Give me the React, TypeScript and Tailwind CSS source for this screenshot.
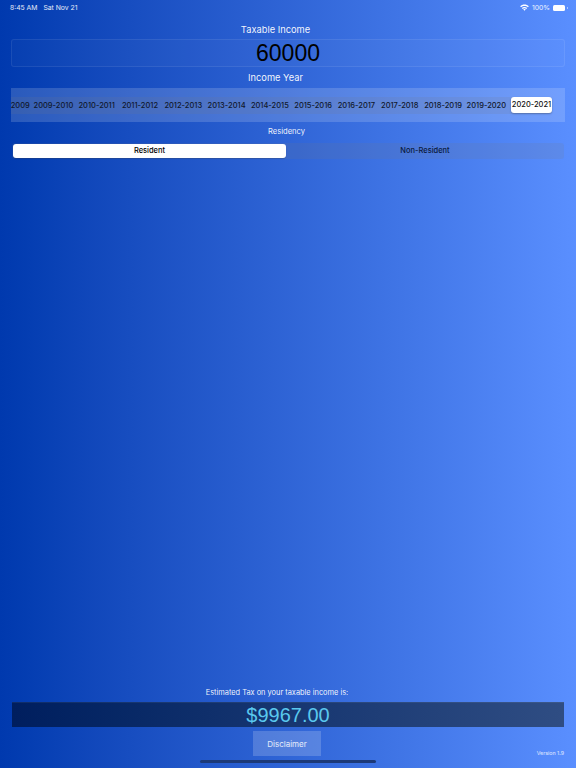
import React from "react";

const years = ["2008-2009","2009-2010","2010-2011","2011-2012","2012-2013","2013-2014","2014-2015","2015-2016","2016-2017","2017-2018","2018-2019","2019-2020"];

function Wifi() {
  return (
    <svg width="9" height="7" viewBox="0 0 20 15" fill="white">
      <path d="M10 1C6.200 1 2.900 2.500.4 4.800l2 2.100C4.400 5 7 3.900 10 3.900s5.600 1.100 7.600 3l2-2.100C17.100 2.500 13.800 1 10 1z" />
      <path d="M10 6.300c-2.200 0-4.300.9-5.900 2.400L6 10.700c1.100-1 2.500-1.600 4-1.600s2.900.6 4 1.600l1.900-2C14.300 7.200 12.200 6.300 10 6.300z" />
      <path d="M10 11c-1 0-1.900.4-2.600 1L10 14.800l2.600-2.800C11.900 11.400 11 11 10 11z" />
    </svg>
  );
}

export default function App() {
  return (
    <div className="w-[576px] h-[768px] overflow-hidden flex flex-col bg-gradient-to-r from-[#0039ae] to-[#5a8fff] font-['Inter','Liberation_Sans',sans-serif] text-white">
      <div className="h-[14px] pl-[10px] pr-[8px] pt-[1px] flex justify-between items-center text-[6.800px] leading-[10px] text-white/90 shrink-0">
        <div className="flex gap-[6px]"><span>8:45 AM</span><span>Sat Nov 21</span></div>
        <div className="flex items-center gap-[2px]">
          <Wifi />
          <span className="ml-[1px]">100%</span>
          <div className="ml-[1px] w-[12px] h-[6px] rounded-[1.500px] bg-white" />
          <div className="w-[1px] h-[2px] bg-white/50" />
        </div>
      </div>

      <div className="mt-[9px] h-[13px] pr-[25px] text-center text-[9.300px] leading-[13px] text-white/95">Taxable Income</div>

      <div className="mt-[3px] mx-[11px] h-[28px] rounded-[3px] border border-[#ffffff14] bg-[#ffffff06] flex items-center justify-center font-['Liberation_Sans',sans-serif] text-[23px] leading-[28px] text-black">60000</div>

      <div className="mt-[4px] h-[13px] pr-[25px] text-center text-[9.300px] leading-[13px] text-white/95">Income Year</div>

      <div className="mt-[4px] mx-[11px] h-[34px] bg-[#ffffff29] overflow-hidden flex items-center justify-end pr-[13px]">
        <div className="h-[17px] flex items-center bg-[#76768026] rounded-[3px] shrink-0">
          {years.map((y, i) => (
            <div key={y} className={i === 0 ? "w-[43.300px] pr-[4px] shrink-0 text-center text-[7.500px] font-medium leading-[17px] text-[#10182c] whitespace-nowrap" : "w-[43.300px] shrink-0 text-center text-[7.500px] font-medium leading-[17px] text-[#10182c] whitespace-nowrap"}>{y}</div>
          ))}
          <div className="w-[41px] h-[16px] ml-[3px] shrink-0 rounded-[3px] bg-white shadow-[0_1px_2px_rgba(0,0,0,0.25)] text-center text-[7.500px] font-medium leading-[16px] text-[#111] whitespace-nowrap">2020-2021</div>
        </div>
      </div>

      <div className="mt-[5px] h-[10px] pr-[3px] text-center text-[7.600px] leading-[10px] text-white/95">Residency</div>

      <div className="mt-[6px] mx-[12px] h-[16px] flex items-center rounded-[3px] bg-[#76768026] text-[7.500px] font-medium text-black">
        <div className="ml-[1px] w-[273px] h-[14px] rounded-[3px] bg-white flex items-center justify-center leading-[14px] shadow-[0_1px_1px_rgba(0,0,0,0.15)]">Resident</div>
        <div className="flex-1 text-center leading-[14px] text-[#0b1a3c]">Non-Resident</div>
      </div>

      <div className="flex-1" />

      <div className="h-[10px] pr-[22px] text-center text-[7.400px] leading-[10px] text-white/95">Estimated Tax on your taxable income is:</div>

      <div className="mt-[4px] mx-[12px] h-[25px] bg-gradient-to-r from-[#001e5e] to-[#2f4d83] border-t border-[#ffffff10] flex items-center justify-center font-['Liberation_Sans',sans-serif] text-[20px] leading-[24px] text-[#5ac8ee]">$9967.00</div>

      <div className="relative h-[41px] shrink-0">
        <div className="absolute left-[253px] top-[4px] w-[68px] h-[25px] bg-[#ffffff2e] flex items-center justify-center text-[8px] text-white/85">Disclaimer</div>
        <div className="absolute right-[12px] top-[22px] text-[5.300px] leading-[8px] text-white/80">Version 1.9</div>
        <div className="absolute left-[200px] top-[33px] w-[176px] h-[2.500px] rounded-full bg-[#1d3a78]" />
      </div>
    </div>
  );
}
